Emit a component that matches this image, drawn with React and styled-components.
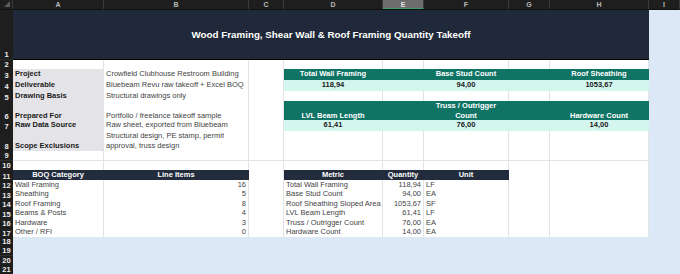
import styled, { createGlobalStyle } from 'styled-components';

const GlobalStyle = createGlobalStyle`
  html, body {
    margin: 0;
    padding: 0;
    background: #dce8f6;
    font-family: "Liberation Sans", Arial, sans-serif;
  }
  * { box-sizing: border-box; }
`;

const COLS = '13px 91px 145px 35px 99px 41px 85px 41px 99px 1fr';
const LETTERS = ['A', 'B', 'C', 'D', 'E', 'F', 'G', 'H', 'I'];
const ROW_H = 9.5;

const fills = {
  label: '#e4e4e8',
  teal: '#107465',
  mint: '#d3f7ef',
  navy: '#232c3d',
  blue: '#dce8f6',
};

const Sheet = styled.div`
  width: 680px;
  height: 274px;
  overflow: hidden;
  background: #dce8f6;
`;

const Row = styled.div`
  display: grid;
  grid-template-columns: ${COLS};
  height: ${(p) => p.$h}px;
`;

const HeadRow = styled(Row)`
  background: #1e1e1e;
  border-bottom: 1px solid #111;
`;

const Corner = styled.div`
  position: relative;
  border-right: 1px solid #3a3a3a;
  &::after {
    content: '';
    position: absolute;
    right: 2px;
    bottom: 2px;
    border-left: 6px solid transparent;
    border-bottom: 6px solid #5c5c5c;
  }
`;

const ColLetter = styled.div`
  display: flex;
  align-items: center;
  justify-content: center;
  font-size: 7px;
  font-weight: bold;
  color: ${(p) => (p.$active ? '#e6e6e6' : '#b9b9b9')};
  background: ${(p) => (p.$active ? '#6c6c6c' : 'transparent')};
  border-right: 1px solid #3a3a3a;
  border-bottom: ${(p) => (p.$active ? '1px solid #3f9b6c' : 'none')};
`;

const RowNum = styled.div`
  display: flex;
  align-items: flex-end;
  justify-content: center;
  font-size: 7.5px;
  line-height: 9px;
  font-weight: bold;
  color: #ececec;
  background: #1e1e1e;
  border-bottom: 1px solid #2e2e2e;
`;

const Title = styled.div`
  grid-column: span 8;
  display: flex;
  align-items: center;
  justify-content: center;
  background: #1f2939;
  border-bottom: 1px solid #000;
  color: #fff;
  font-size: 9.8px;
  font-weight: bold;
`;

const Cell = styled.div`
  display: flex;
  align-items: flex-end;
  justify-content: ${(p) =>
    p.$align === 'right' ? 'flex-end' : p.$align === 'center' ? 'center' : 'flex-start'};
  text-align: ${(p) => p.$align || 'left'};
  padding: 0 2px 1px;
  font-size: 7.5px;
  line-height: 9.5px;
  white-space: ${(p) => (p.$wrap ? 'normal' : 'nowrap')};
  font-weight: ${(p) => (p.$bold ? 'bold' : 'normal')};
  color: ${(p) =>
    p.$fill === 'teal' || p.$fill === 'navy' ? '#fff' : p.$bold ? '#1a1a1a' : '#444'};
  background: ${(p) => fills[p.$fill] || '#fff'};
  border-right: 1px solid ${(p) => fills[p.$fill] || '#e3e3e3'};
  border-bottom: 1px solid ${(p) => fills[p.$fill] || '#e3e3e3'};
  overflow: visible;
  min-width: 0;
`;

const Blank = styled.div`
  grid-column: span 9;
  background: #dce8f6;
`;

const Outside = styled.div`
  background: #dce8f6;
`;

const info = [
  ['Project', 'Crowfield Clubhouse Restroom Building'],
  ['Deliverable', 'Bluebeam Revu raw takeoff + Excel BOQ'],
  ['Drawing Basis', 'Structural drawings only'],
  ['Prepared For', 'Portfolio / freelance takeoff sample'],
  ['Raw Data Source', 'Raw sheet, exported from Bluebeam'],
  ['Scope Exclusions', 'Structural design, PE stamp, permit approval, truss design'],
];

const boq = [
  ['Wall Framing', 16],
  ['Sheathing', 5],
  ['Roof Framing', 8],
  ['Beams & Posts', 4],
  ['Hardware', 3],
  ['Other / RFI', 0],
];

const metrics = [
  ['Total Wall Framing', '118,94', 'LF'],
  ['Base Stud Count', '94,00', 'EA'],
  ['Roof Sheathing Sloped Area', '1053,67', 'SF'],
  ['LVL Beam Length', '61,41', 'LF'],
  ['Truss / Outrigger Count', '76,00', 'EA'],
  ['Hardware Count', '14,00', 'EA'],
];

const kpiTop = [
  ['Total Wall Framing', '118,94'],
  ['Base Stud Count', '94,00'],
  ['Roof Sheathing', '1053,67'],
];
const kpiBottom = [
  ['LVL Beam Length', '61,41'],
  [<>Truss / Outrigger<br />Count</>, '76,00'],
  ['Hardware Count', '14,00'],
];

// KPI band across D..H: labels in D, F, H with E, G as spacers
function KpiCells({ items, fill, bold }) {
  return (
    <>
      <Cell $fill={fill} $align="center" $bold={bold}>{items[0]}</Cell>
      <Cell $fill={fill} />
      <Cell $fill={fill} $align="center" $bold={bold}>{items[1]}</Cell>
      <Cell $fill={fill} />
      <Cell $fill={fill} $align="center" $bold={bold}>{items[2]}</Cell>
    </>
  );
}

function Empties({ n }) {
  return Array.from({ length: n }, (_, i) => <Cell key={i} />);
}

export default function App() {
  const infoHeights = [11, 11, 10, 19, 11, 20];

  return (
    <>
      <GlobalStyle />
      <Sheet>
        <HeadRow $h={10}>
          <Corner />
          {LETTERS.map((l) => (
            <ColLetter key={l} $active={l === 'E'}>{l}</ColLetter>
          ))}
        </HeadRow>

        <Row $h={50}>
          <RowNum>1</RowNum>
          <Title>Wood Framing, Shear Wall &amp; Roof Framing Quantity Takeoff</Title>
          <Outside />
        </Row>

        <Row $h={9}>
          <RowNum>2</RowNum>
          <Empties n={8} />
          <Outside />
        </Row>

        {info.map(([label, value], i) => {
          const n = i + 3;
          let kpi = <Empties n={5} />;
          if (n === 3) kpi = <KpiCells items={kpiTop.map((k) => k[0])} fill="teal" bold />;
          if (n === 4) kpi = <KpiCells items={kpiTop.map((k) => k[1])} fill="mint" bold />;
          if (n === 6) kpi = <KpiCells items={kpiBottom.map((k) => k[0])} fill="teal" bold />;
          if (n === 7) kpi = <KpiCells items={kpiBottom.map((k) => k[1])} fill="mint" bold />;
          return (
            <Row key={label} $h={infoHeights[i]}>
              <RowNum>{n}</RowNum>
              <Cell $fill="label" $bold>{label}</Cell>
              <Cell $wrap={n === 8}>{value}</Cell>
              <Cell />
              {kpi}
              <Outside />
            </Row>
          );
        })}

        {[9, 10].map((n) => (
          <Row key={n} $h={ROW_H}>
            <RowNum>{n}</RowNum>
            <Empties n={8} />
            <Outside />
          </Row>
        ))}

        <Row $h={ROW_H}>
          <RowNum>11</RowNum>
          <Cell $fill="navy" $align="center" $bold>BOQ Category</Cell>
          <Cell $fill="navy" $align="center" $bold>Line Items</Cell>
          <Cell />
          <Cell $fill="navy" $align="center" $bold>Metric</Cell>
          <Cell $fill="navy" $align="center" $bold>Quantity</Cell>
          <Cell $fill="navy" $align="center" $bold>Unit</Cell>
          <Empties n={2} />
          <Outside />
        </Row>

        {boq.map(([cat, count], i) => {
          const m = metrics[i];
          return (
            <Row key={cat} $h={ROW_H}>
              <RowNum>{i + 12}</RowNum>
              <Cell>{cat}</Cell>
              <Cell $align="right">{count}</Cell>
              <Cell />
              <Cell>{m[0]}</Cell>
              <Cell $align="right">{m[1]}</Cell>
              <Cell>{m[2]}</Cell>
              <Empties n={2} />
              <Outside />
            </Row>
          );
        })}

        {[18, 19, 20, 21].map((n) => (
          <Row key={n} $h={ROW_H}>
            <RowNum>{n}</RowNum>
            <Blank />
          </Row>
        ))}
      </Sheet>
    </>
  );
}
